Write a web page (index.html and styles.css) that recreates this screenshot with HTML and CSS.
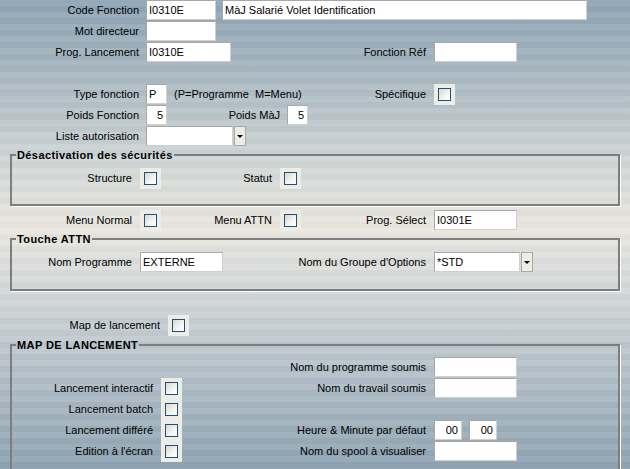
FILE: index.html
```html
<!DOCTYPE html>
<html>
<head>
    <title>Fonction</title>
    <link rel="stylesheet" href="styles.css">
</head>
<body>
    <div class="row">
        <span class="lbl l139 g7">Code Fonction</span>
        <input class="fld w70" value="I0310E">
        <input class="fld w365 ml6" value="MàJ Salarié Volet Identification">
    </div>
    <div class="row">
        <span class="lbl l139 g7">Mot directeur</span>
        <input class="fld w70" value="">
    </div>
    <div class="row">
        <span class="lbl l139 g7">Prog. Lancement</span>
        <input class="fld w85" value="I0310E">
        <span class="lbl l195">Fonction Réf</span>
        <input class="fld w83" value="">
    </div>
    <div class="row"></div>
    <div class="row">
        <span class="lbl l139 g7">Type fonction</span>
        <input class="fld w21" value="P">
        <span class="hint">(P=Programme&nbsp; M=Menu)</span>
        <span class="lbl l112">Spécifique</span>
        <span class="cb"><span class="box"></span></span>
    </div>
    <div class="row">
        <span class="lbl l139 g7">Poids Fonction</span>
        <input class="fld w21 num" value="5">
        <span class="lbl l113 g7">Poids MàJ</span>
        <input class="fld w21 num" value="5">
    </div>
    <div class="row">
        <span class="lbl l139 g7">Liste autorisation</span>
        <input class="fld w87" value="">
        <span class="drop"><span class="arrow"></span></span>
    </div>

    <fieldset class="group g1">
        <legend>Désactivation des sécurités</legend>
        <div class="row">
            <span class="lbl l120">Structure</span>
            <span class="cb"><span class="box"></span></span>
            <span class="lbl l111">Statut</span>
            <span class="cb"><span class="box"></span></span>
        </div>
    </fieldset>

    <div class="row menu-row">
        <span class="lbl l132">Menu Normal</span>
        <span class="cb"><span class="box"></span></span>
        <span class="lbl l111">Menu ATTN</span>
        <span class="cb"><span class="box"></span></span>
        <span class="lbl l125">Prog. Sélect</span>
        <input class="fld w83" value="I0301E">
    </div>

    <fieldset class="group g2">
        <legend>Touche ATTN</legend>
        <div class="row">
            <span class="lbl l120">Nom Programme</span>
            <input class="fld w83" value="EXTERNE">
            <span class="lbl l203">Nom du Groupe d'Options</span>
            <input class="fld w86" value="*STD">
            <span class="drop"><span class="arrow"></span></span>
        </div>
    </fieldset>

    <div class="row map-row">
        <span class="lbl l160">Map de lancement</span>
        <span class="cb"><span class="box"></span></span>
    </div>

    <fieldset class="group g3">
        <legend>MAP DE LANCEMENT</legend>
        <div class="row">
            <span class="lbl l141"></span>
            <span class="cb-empty"></span>
            <span class="lbl l244">Nom du programme soumis</span>
            <input class="fld w83" value="">
        </div>
        <div class="row">
            <span class="lbl l141">Lancement interactif</span>
            <span class="cb"><span class="box"></span></span>
            <span class="lbl l244">Nom du travail soumis</span>
            <input class="fld w83" value="">
        </div>
        <div class="row">
            <span class="lbl l141">Lancement batch</span>
            <span class="cb"><span class="box"></span></span>
        </div>
        <div class="row">
            <span class="lbl l141">Lancement différé</span>
            <span class="cb"><span class="box"></span></span>
            <span class="lbl l244">Heure &amp; Minute par défaut</span>
            <input class="fld w28 num" value="00">
            <input class="fld w28 num ml7" value="00">
        </div>
        <div class="row">
            <span class="lbl l141">Edition à l'écran</span>
            <span class="cb"><span class="box"></span></span>
            <span class="lbl l244">Nom du spool à visualiser</span>
            <input class="fld w83" value="">
        </div>
    </fieldset>
</body>
</html>
```

FILE: styles.css
```css
html, body {
    margin: 0;
    height: 469px;
    overflow: hidden;
}
body {
    font-family: "Liberation Sans", Arial, sans-serif;
    font-size: 11px;
    color: #000;
    background:
        repeating-linear-gradient(to bottom, rgba(255,255,255,0.06) 0, rgba(255,255,255,0.06) 6px, rgba(0,0,0,0.02) 6px, rgba(0,0,0,0.02) 12px),
        linear-gradient(to bottom, #8ea4b5 0px, #9fb1bd 50px, #b8c4c9 110px, #d0d6d6 160px, #e1e1dc 205px, #ebe7df 228px, #dfe0dd 255px, #d2d8d8 295px, #c1cbd0 335px, #adbbc5 390px, #9dafbb 430px, #8fa3b3 469px);
}
.row {
    display: flex;
    align-items: flex-start;
    height: 21px;
}
.lbl {
    flex: none;
    text-align: right;
    line-height: 20px;
    margin-right: 8px;
    white-space: nowrap;
}
.lbl.g7 { margin-right: 7px; }
.l111 { width: 111px; }
.l112 { width: 112px; }
.l113 { width: 113px; }
.l120 { width: 120px; }
.l125 { width: 125px; }
.l132 { width: 132px; }
.l139 { width: 139px; }
.l141 { width: 141px; }
.l160 { width: 160px; }
.l195 { width: 195px; }
.l203 { width: 203px; }
.l244 { width: 244px; }

.fld {
    flex: none;
    box-sizing: border-box;
    height: 20px;
    margin: 0;
    padding: 0 2px;
    font: inherit;
    color: #000;
    background: #fff;
    border: 1px solid;
    border-color: #a7a7a7 #cfcfcf #cfcfcf #a7a7a7;
    outline: none;
}
.fld.num { text-align: right; padding-right: 3px; }
.w21 { width: 21px; }
.w28 { width: 28px; }
.w70 { width: 70px; }
.w83 { width: 83px; }
.w85 { width: 85px; }
.w86 { width: 86px; }
.w87 { width: 87px; }
.w365 { width: 365px; }
.ml6 { margin-left: 6px; }
.ml7 { margin-left: 7px; }

.hint {
    flex: none;
    width: 140px;
    margin-left: 7px;
    line-height: 20px;
    white-space: nowrap;
}

.cb, .cb-empty {
    flex: none;
    width: 21px;
    height: 21px;
    box-sizing: border-box;
    padding: 4px;
}
.cb { background: #eeede5; }
.box {
    display: block;
    width: 13px;
    height: 13px;
    box-sizing: border-box;
    border: 1px solid #1c5180;
    background: linear-gradient(135deg, #d8d8d0 0%, #f4f4f0 60%, #ffffff 100%);
}

.drop {
    flex: none;
    box-sizing: border-box;
    width: 12px;
    height: 20px;
    margin-left: 1px;
    background: #eeede5;
    border: 1px solid #a7a7a7;
    display: flex;
    align-items: center;
    justify-content: center;
}
.arrow {
    width: 0;
    height: 0;
    border-left: 3px solid transparent;
    border-right: 3px solid transparent;
    border-top: 3px solid #000;
}

.group {
    margin: 2px 10px 0;
    padding: 7px 0 15px;
    border: 2px solid #7e7e7e;
    box-shadow: 1px 1px 0 #fff;
    min-width: 0;
}
.group legend {
    margin-left: 4px;
    padding: 0 1px;
    font-weight: bold;
    line-height: 12px;
    letter-spacing: 0.4px;
}
.g2 { padding-bottom: 16px; }
.g3 { margin-top: 3px; padding-top: 6px; }
.menu-row { margin-top: 4px; }
.map-row { margin-top: 24px; }
```
